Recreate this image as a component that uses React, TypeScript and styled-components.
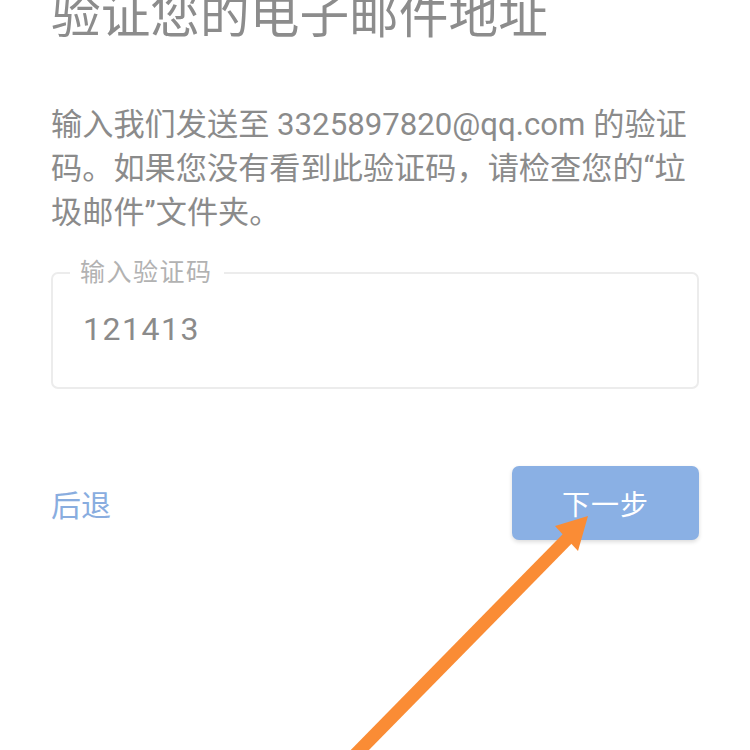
import React from "react";
import styled, { createGlobalStyle } from "styled-components";

const GlobalStyle = createGlobalStyle`
  html, body {
    margin: 0;
    padding: 0;
    background: #ffffff;
  }
  body {
    width: 750px;
    height: 750px;
    overflow: hidden;
    font-family: "Roboto", "Noto Sans CJK SC", sans-serif;
  }
`;

const Page = styled.div`
  position: relative;
  width: 750px;
  height: 750px;
  box-sizing: border-box;
  padding: 0 51px;
  display: flex;
  flex-direction: column;
`;

const Title = styled.h1`
  margin: -14px 0 0;
  font-size: 49.7px;
  font-weight: 400;
  line-height: 60px;
  color: #8c8c8c;
  white-space: nowrap;
`;

const Message = styled.p`
  margin: 57px 0 0;
  font-size: 31.2px;
  line-height: 44px;
  color: #8b8b8b;
`;

const CodeField = styled.fieldset`
  margin: 24px 0 0;
  padding: 26px 30px 0;
  height: 130px;
  box-sizing: border-box;
  border: 2px solid #ececec;
  border-radius: 7px;
`;

const FieldLabel = styled.legend`
  margin-left: -13px;
  padding: 0 11px 0 10px;
  font-size: 25px;
  line-height: 28px;
  letter-spacing: 1.5px;
  color: #b2b2b2;
`;

const CodeValue = styled.div`
  font-family: "Roboto", sans-serif;
  font-size: 32px;
  line-height: 32px;
  letter-spacing: 1.5px;
  color: #8b8b8b;
`;

const Actions = styled.div`
  margin-top: 77px;
  display: flex;
  align-items: center;
  justify-content: space-between;
`;

const BackLink = styled.button`
  border: none;
  background: none;
  padding: 0;
  font-family: "Noto Sans CJK SC", sans-serif;
  font-size: 30px;
  color: #89addf;
  cursor: pointer;
`;

const NextButton = styled.button`
  width: 187px;
  height: 74px;
  border: none;
  border-radius: 7px;
  background: #8ab0e4;
  box-shadow: 0 2px 4px rgba(0, 0, 0, 0.14);
  font-family: "Noto Sans CJK SC", sans-serif;
  font-size: 28px;
  font-weight: 400;
  letter-spacing: 1px;
  color: #ffffff;
  cursor: pointer;
`;

const Pointer = styled.svg`
  position: absolute;
  left: 0;
  top: 0;
  width: 750px;
  height: 750px;
  pointer-events: none;
`;

export default function App() {
  return (
    <>
      <GlobalStyle />
      <Page>
        <Title>验证您的电子邮件地址</Title>
        <Message>
          输入我们发送至 3325897820@qq.com 的验证码。如果您没有看到此验证码，请检查您的“垃圾邮件”文件夹。
        </Message>
        <CodeField>
          <FieldLabel>输入验证码</FieldLabel>
          <CodeValue>121413</CodeValue>
        </CodeField>
        <Actions>
          <BackLink>后退</BackLink>
          <NextButton>下一步</NextButton>
        </Actions>
        <Pointer viewBox="0 0 750 750">
          <line
            x1="352"
            y1="758"
            x2="570"
            y2="536"
            stroke="#fa8c35"
            strokeWidth="13"
          />
          <polygon points="588,516 555,526 578,551" fill="#fa8c35" />
        </Pointer>
      </Page>
    </>
  );
}
